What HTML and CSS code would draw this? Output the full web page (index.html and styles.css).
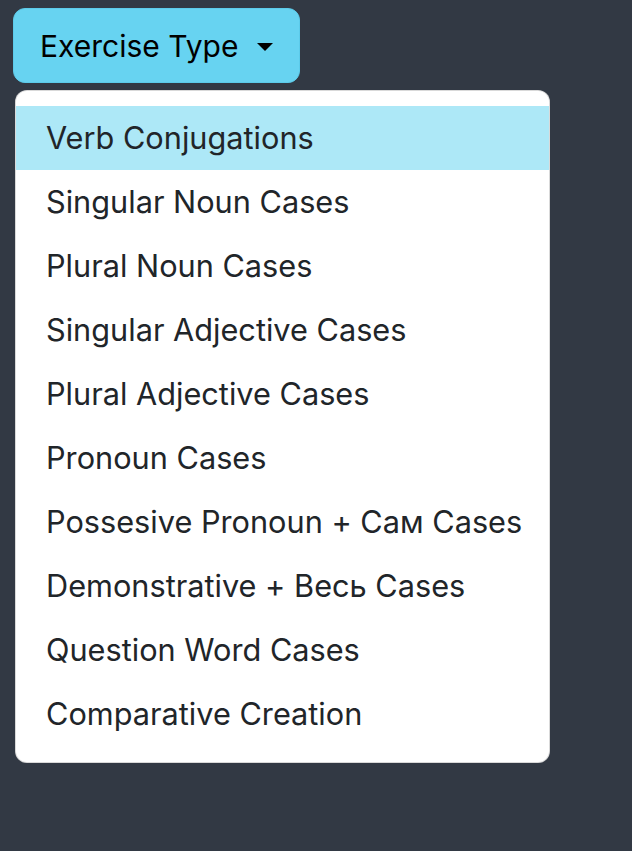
FILE: index.html
```html
<!DOCTYPE html>
<html lang="en">
<head>
<meta charset="utf-8">
<title>Exercise Type</title>
<link rel="stylesheet" href="styles.css">
</head>
<body>
<div class="dropdown">
  <button class="toggle" type="button">Exercise Type<span class="caret"></span></button>
  <ul class="menu">
    <li class="item active">Verb Conjugations</li>
    <li class="item">Singular Noun Cases</li>
    <li class="item">Plural Noun Cases</li>
    <li class="item">Singular Adjective Cases</li>
    <li class="item">Plural Adjective Cases</li>
    <li class="item">Pronoun Cases</li>
    <li class="item">Possesive Pronoun + Сам Cases</li>
    <li class="item">Demonstrative + Весь Cases</li>
    <li class="item">Question Word Cases</li>
    <li class="item">Comparative Creation</li>
  </ul>
</div>
</body>
</html>
```
FILE: styles.css
```css
html, body {
  margin: 0;
  padding: 0;
  background: #323944;
  height: 100%;
}
body {
  font-family: Inter, "Noto Sans", "Liberation Sans", sans-serif;
  -webkit-font-smoothing: antialiased;
}
.dropdown {
  padding: 8px 0 0 13px;
  display: flex;
  flex-direction: column;
  align-items: flex-start;
}
.toggle {
  display: inline-flex;
  align-items: center;
  height: 75px;
  padding: 0 26px 0 26px;
  background: #67d3f1;
  border: 1px solid #5ccbea;
  border-radius: 12px;
  color: #000;
  font-family: inherit;
  font-size: 30px;
  line-height: 46px;
  cursor: pointer;
}
.caret {
  display: inline-block;
  width: 0;
  height: 0;
  margin-left: 19px;
  border-top: 8px solid #000;
  border-left: 8px solid transparent;
  border-right: 8px solid transparent;
  margin-top: 2px;
}
.menu {
  list-style: none;
  margin: 7px 0 0 2px;
  padding: 15px 0 16px;
  width: 535px;
  box-sizing: border-box;
  background: #fff;
  border: 1px solid rgba(0, 0, 0, 0.15);
  border-radius: 12px;
}
.item {
  padding: 8px 30px;
  font-size: 30.7px;
  line-height: 48px;
  color: #212529;
  white-space: nowrap;
}
.item.active {
  background: #ade8f7;
}
```
